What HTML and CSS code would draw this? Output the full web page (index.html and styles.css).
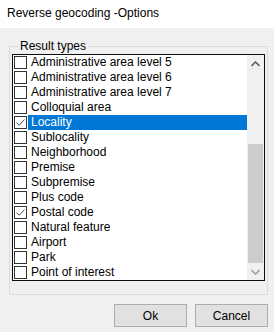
FILE: index.html
```html
<!DOCTYPE html>
<html lang="en">
<head>
    <meta charset="UTF-8">
    <title>Reverse geocoding -Options</title>
    <link rel="stylesheet" href="styles.css">
</head>
<body>
    <div class="window">
        <div class="titlebar">Reverse geocoding -Options</div>
        <div class="content">
            <fieldset class="group">
                <legend>Result types</legend>
                <div class="listbox">
                    <ul class="items">
                        <li class="item"><span class="check"></span><span class="label">Administrative area level 5</span></li>
                        <li class="item"><span class="check"></span><span class="label">Administrative area level 6</span></li>
                        <li class="item"><span class="check"></span><span class="label">Administrative area level 7</span></li>
                        <li class="item"><span class="check"></span><span class="label">Colloquial area</span></li>
                        <li class="item selected"><span class="check checked"><svg width="11" height="11" viewBox="0 0 11 11"><path d="M1.5 5.5 L4.2 8.2 L9.5 2.5" fill="none" stroke="#505050" stroke-width="1"/></svg></span><span class="label">Locality</span></li>
                        <li class="item"><span class="check"></span><span class="label">Sublocality</span></li>
                        <li class="item"><span class="check"></span><span class="label">Neighborhood</span></li>
                        <li class="item"><span class="check"></span><span class="label">Premise</span></li>
                        <li class="item"><span class="check"></span><span class="label">Subpremise</span></li>
                        <li class="item"><span class="check"></span><span class="label">Plus code</span></li>
                        <li class="item"><span class="check checked"><svg width="11" height="11" viewBox="0 0 11 11"><path d="M1.5 5.5 L4.2 8.2 L9.5 2.5" fill="none" stroke="#505050" stroke-width="1"/></svg></span><span class="label">Postal code</span></li>
                        <li class="item"><span class="check"></span><span class="label">Natural feature</span></li>
                        <li class="item"><span class="check"></span><span class="label">Airport</span></li>
                        <li class="item"><span class="check"></span><span class="label">Park</span></li>
                        <li class="item"><span class="check"></span><span class="label">Point of interest</span></li>
                    </ul>
                    <div class="scrollbar">
                        <div class="arrow"><svg width="9" height="6" viewBox="0 0 9 6"><path d="M0.5 5 L4.5 1 L8.5 5" fill="none" stroke="#606060" stroke-width="1.6"/></svg></div>
                        <div class="track"><div class="thumb"></div></div>
                        <div class="arrow"><svg width="9" height="6" viewBox="0 0 9 6"><path d="M0.5 1 L4.5 5 L8.5 1" fill="none" stroke="#a0a0a0" stroke-width="1.6"/></svg></div>
                    </div>
                </div>
            </fieldset>
            <div class="buttons">
                <button class="button">Ok</button>
                <button class="button">Cancel</button>
            </div>
        </div>
    </div>
</body>
</html>
```

FILE: styles.css
```css
body {
    margin: 0;
    background-color: #f0f0f0;
    font-family: "Liberation Sans", Arial, sans-serif;
    font-size: 12px;
    color: #000;
}
.window {
    width: 274px;
    height: 332px;
    overflow: hidden;
}
.titlebar {
    height: 28px;
    background-color: #fff;
    padding-left: 7px;
    line-height: 27px;
    box-sizing: border-box;
}
.content {
    padding: 0 6px 0 9px;
}
.group {
    margin: 11px 0 0 0;
    padding: 1px 2px 12px 2px;
    border: 1px solid #dcdcdc;
    height: 256px;
    box-sizing: border-box;
}
.group legend {
    margin-left: 6px;
    padding: 0 2px;
    line-height: 14px;
}
.listbox {
    display: flex;
    border: 1px solid #0d0d0d;
    background-color: #fff;
    height: 227px;
    box-sizing: border-box;
}
.items {
    list-style: none;
    margin: 0;
    padding: 0;
    flex: 1;
}
.item {
    display: flex;
    align-items: center;
    height: 15px;
}
.check {
    width: 13px;
    height: 13px;
    margin-left: 1px;
    border: 1px solid #333;
    box-sizing: border-box;
    background-color: #fff;
    display: flex;
    align-items: center;
    justify-content: center;
}
.label {
    flex: 1;
    height: 15px;
    line-height: 15px;
    padding-left: 3px;
    margin-left: 1px;
    white-space: nowrap;
}
.selected .label {
    background-color: #0078d7;
    color: #fff;
}
.scrollbar {
    width: 17px;
    background-color: #f0f0f0;
    display: flex;
    flex-direction: column;
}
.arrow {
    height: 17px;
    display: flex;
    align-items: center;
    justify-content: center;
}
.track {
    flex: 1;
    display: flex;
    flex-direction: column;
    justify-content: flex-end;
}
.thumb {
    height: 119px;
    margin: 0 1px;
    background-color: #cdcdcd;
}
.buttons {
    display: flex;
    justify-content: flex-end;
    gap: 8px;
    margin-top: 9px;
}
.button {
    width: 73px;
    height: 23px;
    padding: 0;
    border: 1px solid #adadad;
    background-color: #e1e1e1;
    font-family: "Liberation Sans", Arial, sans-serif;
    font-size: 12px;
    color: #000;
}
```
